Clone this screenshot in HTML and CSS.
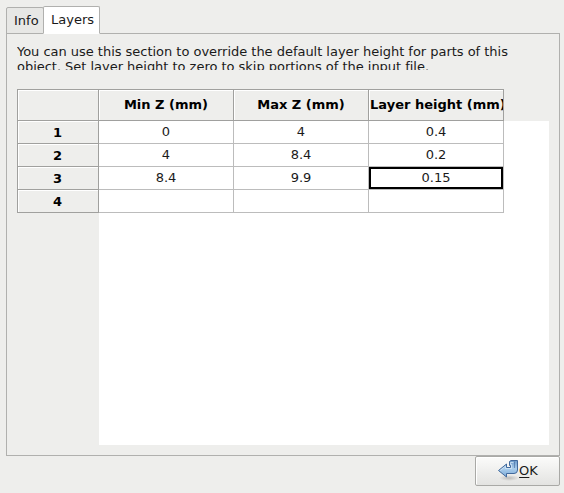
FILE: index.html
```html
<!DOCTYPE html>
<html lang="en">
<head>
<meta charset="utf-8">
<title>Layers</title>
<link rel="stylesheet" href="styles.css">
</head>
<body>
<div class="dialog">
  <div class="tabs">
    <div class="tab">Info</div>
    <div class="tab active">Layers</div>
  </div>
  <div class="panel">
    <p class="description">You can use this section to override the default layer height for parts of this<br>object. Set layer height to zero to skip portions of the input file.</p>
    <div class="sheet">
      <table class="grid">
        <thead>
          <tr><th class="rowhead"></th><th><span>Min Z (mm)</span></th><th><span>Max Z (mm)</span></th><th><span class="wide">Layer height (mm)</span></th></tr>
        </thead>
        <tbody>
          <tr><th>1</th><td>0</td><td>4</td><td>0.4</td></tr>
          <tr><th>2</th><td>4</td><td>8.4</td><td>0.2</td></tr>
          <tr><th>3</th><td>8.4</td><td>9.9</td><td class="selected">0.15</td></tr>
          <tr><th>4</th><td></td><td></td><td></td></tr>
        </tbody>
      </table>
    </div>
  </div>
  <div class="actions">
    <button class="ok">
      <svg class="icon" width="22" height="22" viewBox="0 0 22 22">
        <defs>
          <linearGradient id="arrow" x1="0" y1="0" x2="0" y2="1"><stop offset="0" stop-color="#6c9acb"/><stop offset=".5" stop-color="#a9cdec"/><stop offset="1" stop-color="#7ba8d6"/></linearGradient>
          <radialGradient id="shade"><stop offset="0" stop-color="#000" stop-opacity=".2"/><stop offset="1" stop-color="#000" stop-opacity="0"/></radialGradient>
        </defs>
        <ellipse cx="12" cy="19" rx="10" ry="3" fill="url(#shade)"/>
        <path d="M1.500 11.500 L9.500 5 V8.500 H13.500 V6.500 H12.500 V2.500 L14 1.500 H20.500 V11 Q20.500 14.500 17 14.500 H9.500 V18 Z" fill="url(#arrow)" stroke="#41699c" stroke-linejoin="round"/>
        <path d="M3.200 11.500 L8.500 7.200 V9.500 H14.500 V5.500 H13.500 V3.500 H16.500" fill="none" stroke="#d8e8f6" stroke-opacity=".75"/>
        <path d="M17.500 2.500 V9" stroke="#41699c" stroke-opacity=".6"/>
      </svg>
      <span><u>O</u>K</span>
    </button>
  </div>
</div>
</body>
</html>
```
FILE: styles.css
```css
* { box-sizing: border-box; }
body {
  margin: 0;
  background: #eeeeec;
  color: #1a1a1a;
  font: 13px/15px "DejaVu Sans", sans-serif;
}
.dialog {
  display: flex;
  flex-direction: column;
  height: 493px;
  padding: 6px 4px 0 6px;
}
.tabs {
  display: flex;
  align-items: flex-end;
  height: 28px;
  margin-bottom: -1px;
}
.tab {
  width: 38px;
  height: 27px;
  padding: 5px 0 0 7px;
  border: 1px solid #b0b0ae;
  border-radius: 2px 2px 0 0;
  background: #e7e7e5;
  white-space: nowrap;
}
.tab.active {
  width: 57px;
  height: 28px;
  margin-left: -1px;
  border-bottom-color: #fff;
  background: #fff;
  z-index: 1;
}
.panel {
  height: 423px;
  padding: 10px 10px 0;
  border: 1px solid #b0b0ae;
}
.description {
  height: 26px;
  margin: 0 0 19px;
  overflow: hidden;
  letter-spacing: -0.025px;
  white-space: nowrap;
}
.sheet {
  height: 356px;
  background: linear-gradient(#fff, #fff) 82px 32px no-repeat;
}
.grid {
  width: 487px;
  table-layout: fixed;
  border-collapse: separate;
  border-spacing: 0;
  border-top: 1px solid #a0a09e;
}
.rowhead { width: 82px; }
.grid th, .grid td {
  height: 23px;
  padding: 0;
  border: solid #bcbcbc;
  border-width: 0 1px 1px 0;
  text-align: center;
  vertical-align: middle;
  overflow: hidden;
  white-space: nowrap;
}
.grid th {
  border-color: #a0a09e;
  background: #eeeeec;
  box-shadow: inset 1px 1px #fff;
  color: #000;
}
.grid thead th { height: 31px; padding-bottom: 2px; }
.grid th:first-child { border-left-width: 1px; padding-right: 1px; }
.grid thead span {
  display: flex;
  justify-content: center;
  margin: 0 1px;
  overflow: hidden;
}
.grid thead .wide {
  justify-content: flex-start;
  margin: 0 0 0 1px;
}
.grid td { padding-bottom: 2px; }
.grid .selected { box-shadow: inset 0 0 0 2px #000; }
.actions {
  display: flex;
  justify-content: flex-end;
}
.ok {
  display: flex;
  align-items: center;
  justify-content: center;
  width: 85px;
  height: 30px;
  padding: 0 0 2px;
  border: 1px solid #a9a9a6;
  border-radius: 2px;
  background: linear-gradient(#fbfbfa, #e3e3e1);
  box-shadow: inset 1px 1px #fff;
  color: inherit;
  font: inherit;
}
.ok u { text-underline-offset: 2px; }
```
